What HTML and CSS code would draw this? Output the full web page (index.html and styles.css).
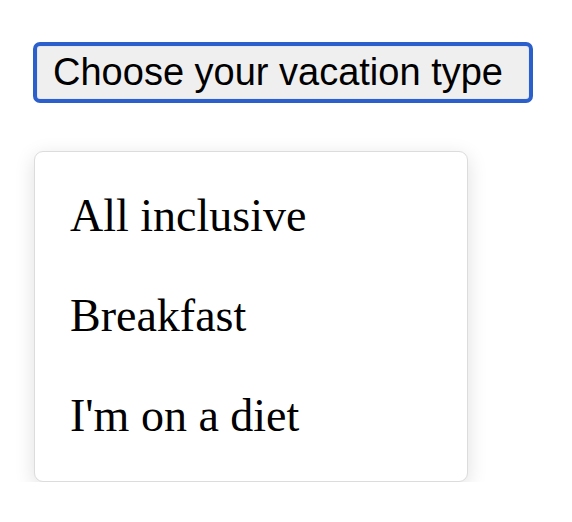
FILE: index.html
```html
<!DOCTYPE html>
<html>
<head>
<meta charset="utf-8">
<link rel="stylesheet" href="styles.css">
</head>
<body>
<div class="page">
  <button class="trigger">Choose your vacation type</button>
  <ul class="menu">
    <li class="item">All inclusive</li>
    <li class="item">Breakfast</li>
    <li class="item">I'm on a diet</li>
  </ul>
</div>
</body>
</html>
```
FILE: styles.css
```css
html, body {
  margin: 0;
  padding: 0;
  background: #ffffff;
}
.page {
  display: flex;
  flex-direction: column;
  align-items: flex-start;
  padding: 42px 0 0 33px;
}
.trigger {
  box-sizing: border-box;
  width: 500px;
  height: 61px;
  margin: 0;
  padding: 0 14px 0 4px;
  font-family: "Liberation Sans", Arial, sans-serif;
  font-size: 38px;
  color: #000;
  background: #efefef;
  border: 4px solid #2b5fcb;
  border-radius: 7px;
  box-shadow: inset 0 0 0 1px #e4e7ee;
  text-align: center;
  white-space: nowrap;
}
.menu {
  box-sizing: border-box;
  list-style: none;
  margin: 48px 0 0 1px;
  padding: 14px 0 15px 35px;
  width: 434px;
  background: #fff;
  border: 1px solid #dcdcdc;
  border-radius: 9px;
  box-shadow: 0 5px 20px rgba(0, 0, 0, 0.13);
}
.item {
  font-family: "Liberation Serif", "Times New Roman", serif;
  font-size: 46px;
  line-height: 100px;
  color: #000;
}
```
